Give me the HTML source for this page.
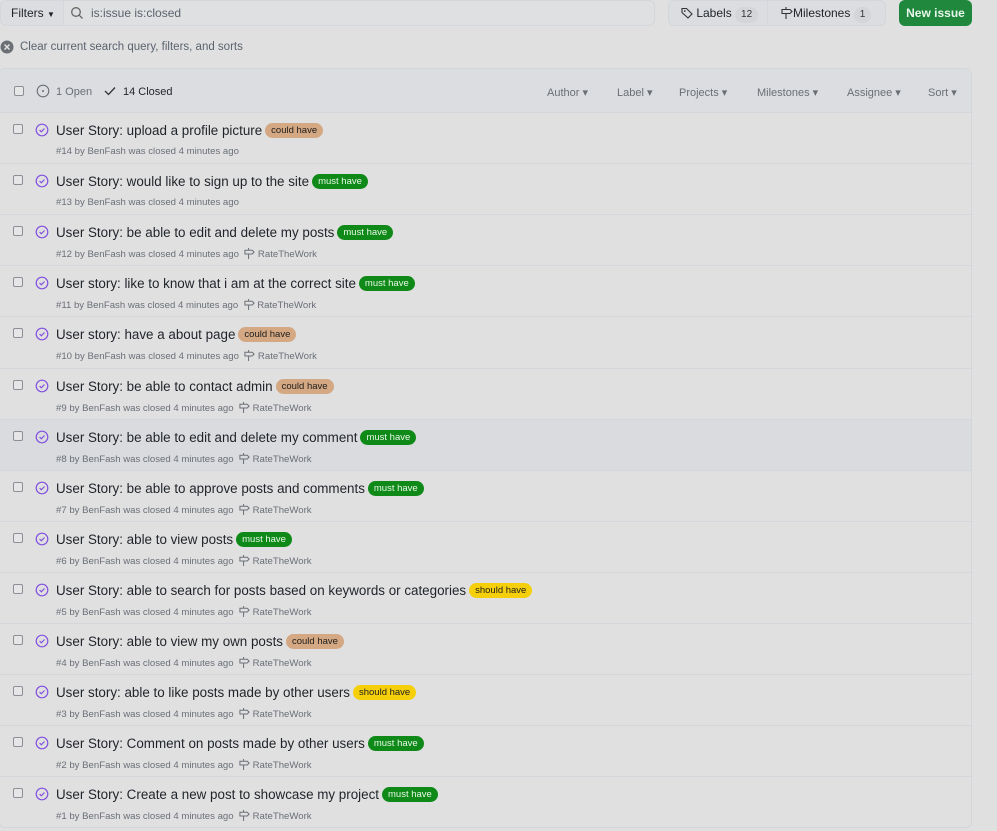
<!DOCTYPE html>
<html><head><meta charset="utf-8"><style>
*{box-sizing:border-box;margin:0;padding:0}
body{width:997px;height:831px;background:#e0e0e1;font-family:"Liberation Sans",sans-serif;color:#1f2328;position:relative;overflow:hidden}
.abs{position:absolute}
.filters{left:0;top:0;width:64px;height:26px;border:1px solid #d3d6da;border-radius:6px 0 0 6px;background:#dcdde0;font-size:12px;line-height:24px;padding-left:10px}
.search{left:63px;top:0;width:592px;height:26px;border:1px solid #d3d6da;border-radius:0 6px 6px 0;background:#dfe0e2;font-size:12px;line-height:24px;padding-left:27px;color:#5b636d}
.lm{left:668px;top:0;width:218px;height:26px;border:1px solid #d3d6da;border-radius:6px;background:#dcdde0;font-size:12px;line-height:24px}
.cnt{display:inline-block;background:#d3d5d9;border-radius:9px;padding:0 6px;font-size:10px;line-height:16px;color:#333}
.newb{left:899px;top:0;width:73px;height:26px;background:#1f883d;border-radius:6px;color:#e8f5ea;font-size:12px;font-weight:bold;line-height:26px;text-align:center}
.clear{left:0;top:40px;font-size:11.5px;color:#5b636d;line-height:14px}
.box{left:-1px;top:68px;width:973px;height:760px;border:1px solid #d3d6da;border-radius:6px;background:#e0e0e1}
.hdr{left:0;top:0;width:971px;height:44px;background:#dcdde0;border-bottom:1px solid #d3d6da;border-radius:6px 6px 0 0}
.cb{width:10px;height:10px;border:1px solid #8c9096;border-radius:2px;background:#e6e6e6}
.hf{font-size:11px;color:#6a6f76;top:17px}
.row{left:0;width:971px;height:51px;border-top:1px solid #d3d6da}
.t{position:absolute;left:56px;top:10px;font-size:13.4px;color:#1f2328;white-space:nowrap}
.m{position:absolute;left:56px;top:33px;font-size:9.6px;color:#6a6f76;white-space:nowrap}
.lb{display:inline-block;font-size:9.5px;border-radius:10px;padding:0 6px;line-height:15px;vertical-align:2px;margin-left:3px}
.must{background:#0f8a18;color:#e9f7e9}.could{background:#d4a882;color:#1d1d1d}.should{background:#f5cf0a;color:#1d1d1d}
.ic{position:absolute;left:35px;top:10px}
</style></head><body>
<div class="abs filters">Filters <span style="font-size:8px">▼</span></div>
<div class="abs search">is:issue is:closed</div>
<svg class="abs" style="left:70px;top:6px" width="14" height="14" viewBox="0 0 14 14"><circle cx="6" cy="6" r="4.3" fill="none" stroke="#666" stroke-width="1.3"/><path d="M9.2 9.2L12.5 12.5" stroke="#666" stroke-width="1.3"/></svg>
<div class="abs lm"><span style="position:absolute;left:12px;top:0"><svg width="12" height="12" viewBox="0 0 12 12" style="vertical-align:-2px"><path d="M1 1.5h4.5l5.5 5.5-4 4L1 5.5z" fill="none" stroke="#333" stroke-width="1.1"/><circle cx="3.8" cy="4" r=".9" fill="#333"/></svg> Labels <span class="cnt">12</span></span><span style="position:absolute;left:98px;top:-1px;bottom:-1px;border-left:1px solid #d3d6da"></span><span style="position:absolute;left:112px;top:0"><svg width="12" height="12" viewBox="0 0 12 12" style="vertical-align:-2px"><path d="M1 2.5h8l2 2-2 2H1zM5 6.5V12M5 0v2.5" fill="none" stroke="#333" stroke-width="1.1"/></svg>Milestones <span class="cnt">1</span></span></div>
<div class="abs newb">New issue</div>
<svg class="abs" style="left:0;top:40px" width="14" height="14" viewBox="0 0 14 14"><circle cx="7" cy="7" r="6.5" fill="#6a6f76"/><path d="M4.5 4.5l5 5M9.5 4.5l-5 5" stroke="#e0e0e1" stroke-width="1.5"/></svg>
<div class="abs clear" style="left:20px">Clear current search query, filters, and sorts</div>
<div class="abs box">
<div class="abs hdr">
<div class="abs cb" style="left:14px;top:17px"></div>
<svg class="abs" style="left:36px;top:15px" width="14" height="14" viewBox="0 0 14 14"><circle cx="7" cy="7" r="5.8" fill="none" stroke="#6a6f76" stroke-width="1.1"/><circle cx="7" cy="7" r="1" fill="#6a6f76"/></svg>
<div class="abs hf" style="left:56px">1 Open</div>
<svg class="abs" style="left:104px;top:17px" width="12" height="10" viewBox="0 0 12 10"><path d="M1 5l3.5 3.5L11 1.5" fill="none" stroke="#333" stroke-width="1.3"/></svg>
<div class="abs hf" style="left:123px;color:#1f2328">14 Closed</div>
<div class="abs hf" style="left:547px">Author ▾</div>
<div class="abs hf" style="left:617px">Label ▾</div>
<div class="abs hf" style="left:679px">Projects ▾</div>
<div class="abs hf" style="left:757px">Milestones ▾</div>
<div class="abs hf" style="left:847px">Assignee ▾</div>
<div class="abs hf" style="left:928px">Sort ▾</div>
</div>
</div>
<div id="rows"></div>
<script>
var d=[["User Story: upload a profile picture","could",14,0],["User Story: would like to sign up to the site","must",13,0],["User Story: be able to edit and delete my posts","must",12,1],["User story: like to know that i am at the correct site","must",11,1],["User story: have a about page","could",10,1],["User Story: be able to contact admin","could",9,1],["User Story: be able to edit and delete my comment","must",8,1],["User Story: be able to approve posts and comments","must",7,1],["User Story: able to view posts","must",6,1],["User Story: able to search for posts based on keywords or categories","should",5,1],["User Story: able to view my own posts","could",4,1],["User story: able to like posts made by other users","should",3,1],["User Story: Comment on posts made by other users","must",2,1],["User Story: Create a new post to showcase my project","must",1,1]];
var h="";d.forEach(function(r,i){var top=112+i*51.1;var ms=r[3]?' &nbsp;<svg width="11" height="11" viewBox="0 0 12 12" style="vertical-align:-2px"><path d="M1 2.5h8l2 2-2 2H1zM5 6.5V12M5 0v2.5" fill="none" stroke="#6a6f76" stroke-width="1.1"/></svg> RateTheWork':'';
h+='<div class="abs row" style="top:'+top+'px;'+(i==6?'background:#dadbde':'')+'"><div class="abs cb" style="left:13px;top:11px"></div><svg class="ic" width="14" height="14" viewBox="0 0 14 14"><circle cx="7" cy="7" r="5.8" fill="none" stroke="#8250df" stroke-width="1.2"/><path d="M4.6 7.1l1.7 1.7 3.2-3.3" fill="none" stroke="#8250df" stroke-width="1.2"/></svg><div class="t">'+r[0]+'<span class="lb '+r[1]+'">'+r[1]+' have</span></div><div class="m">#'+r[2]+' by BenFash was closed 4 minutes ago'+ms+'</div></div>';});
document.getElementById("rows").innerHTML=h;
</script>
</body></html>
